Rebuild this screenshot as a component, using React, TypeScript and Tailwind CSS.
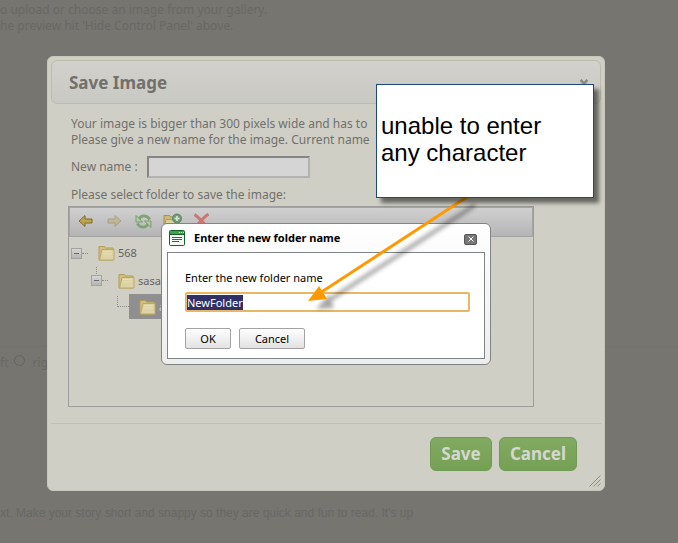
import React, { useEffect, useRef } from "react"

const BackArrow = ({ className }: { className?: string }) => (
  <svg width="15" height="12" viewBox="0 0 15 12" className={className}>
    <path
      d="M7 .6 1 6l6 5.4V8h7V4H7z"
      fill="#bfa44c"
      stroke="#7d6a35"
      strokeWidth="1"
      strokeLinejoin="round"
    />
  </svg>
)

const RefreshIcon = () => (
  <svg width="17" height="17" viewBox="0 0 17 17" fill="none">
    <path d="M4 6.500C5.500 2 11.500 1.500 14.800 6.500" stroke="#7da672" strokeWidth="2.800" />
    <path d="M1 2.500V9h6.500z" fill="#b3cbaa" stroke="#6f9866" strokeWidth=".9" />
    <path d="M13 10.500C11.500 15 5.500 15.500 2.200 10.500" stroke="#7da672" strokeWidth="2.800" />
    <path d="M16 14.500V8H9.500z" fill="#b3cbaa" stroke="#6f9866" strokeWidth=".9" />
  </svg>
)

const FolderIcon = () => (
  <svg width="17" height="16" viewBox="0 0 17 16" className="shrink-0">
    <path d="M1 15V1.500h5.500l1 1.500H15v12z" fill="#d3c07e" stroke="#b39d58" />
    <path d="M4 4.500h12V15H1.500z" fill="#ddd3a2" stroke="#bba868" />
    <path d="M5 6.500h9M4.500 9H14" stroke="#e6dfbc" />
  </svg>
)

const NewFolderIcon = () => (
  <svg width="20" height="16" viewBox="0 0 20 16">
    <path d="M1 14V2.500h5.500l1 1.500H15v10z" fill="#cdbb7c" stroke="#a5924f" />
    <path d="M3 6.500h13V14H1.500z" fill="#dacf9d" stroke="#b09d5c" />
    <circle cx="14" cy="5.500" r="4.500" fill="#6f9c75" stroke="#5a8562" />
    <path d="M14 3v5M11.500 5.500h5" stroke="#dce5dc" strokeWidth="1.600" />
  </svg>
)

const DeleteIcon = () => (
  <svg width="17" height="16" viewBox="0 0 17 16" fill="none">
    <path d="M1.500 1.500C5 4 10 9 14.500 14.500M15.500 1C10 5 6 9 3 14.500" stroke="#cd7773" strokeWidth="3" />
  </svg>
)

const FormIcon = () => (
  <svg width="16" height="16" viewBox="0 0 16 16">
    <rect x=".5" y=".5" width="15" height="15" rx="1" fill="#f4faf4" stroke="#17602b" />
    <path d="M1 1h14v3H1z" fill="#3fa34d" />
    <path d="M10 2.500h1M12 2.500h1M14 2.500h1" stroke="#d8f0d8" />
    <path d="M1 4.500h14" stroke="#17602b" />
    <path d="M3 7.500h10M3 9.500h10M3 11.500h7" stroke="#2c6e3f" />
  </svg>
)

const tools = [
  { name: "Back", icon: <BackArrow /> },
  { name: "Forward", icon: <BackArrow className="-scale-x-100 opacity-40" /> },
  { name: "Refresh", icon: <RefreshIcon /> },
  { name: "New folder", icon: <NewFolderIcon /> },
  { name: "Delete", icon: <DeleteIcon /> },
]

const Toggle = ({ label }: { label: string }) => (
  <button
    aria-label={label}
    className="flex size-[11px] shrink-0 items-center justify-center border border-[#a3a3a3] bg-linear-to-b from-[#d6d6d4] to-[#b5b5b3]"
  >
    <span className="h-px w-[5px] bg-[#686868]" />
  </button>
)

const PageBehind = () => (
  <div className="overflow-hidden whitespace-nowrap text-xs leading-4 text-[#696864]">
    <p className="pt-[2px] font-['Noto_Sans',sans-serif]">
      o upload or choose an image from your gallery.
      <br />
      he preview hit 'Hide Control Panel' above.
    </p>
    <div className="mt-[312px] flex h-[150px] items-start border-t border-[#73726e] pt-[8px] font-['Noto_Sans',sans-serif]">
      <span>ft</span>
      <label className="flex items-start">
        <input
          type="radio"
          name="align"
          className="mr-[7px] ml-[6px] size-[11px] appearance-none rounded-full border border-[#64635f]"
        />
        right
      </label>
    </div>
    <p className="pt-[9px] font-['Liberation_Sans',sans-serif]">
      xt. Make your story short and snappy so they are quick and fun to read. It's up
    </p>
  </div>
)

const FolderBrowser = () => (
  <div className="mr-[67px] ml-[17px] h-[201px] border border-[#9d9d9b] text-[11px] text-[#66635e]">
    <div className="flex h-[30px] items-center border border-[#a4a4a4] bg-linear-to-b from-[#d0d0d0] to-[#b5b5b5] pb-[2px] pl-px">
      {tools.map((tool) => (
        <button key={tool.name} aria-label={tool.name} className="flex w-[29px] justify-center">
          {tool.icon}
        </button>
      ))}
    </div>
    <ul className="pt-[2px] font-['Noto_Sans',sans-serif]">
      <li className="flex h-7 items-center pl-[2px]">
        <Toggle label="Collapse 568" />
        <span className="mr-[10px] w-[6px] border-t border-dotted border-[#8a8a88]" />
        <FolderIcon />
        <span className="ml-[3px]">568</span>
      </li>
      <li className="relative flex h-[27px] items-center pl-[22px]">
        <span className="absolute top-0 left-[27px] h-[7px] border-l border-dotted border-[#8a8a88]" />
        <Toggle label="Collapse sasa" />
        <span className="mr-[10px] w-[6px] border-t border-dotted border-[#8a8a88]" />
        <FolderIcon />
        <span className="ml-[3px]">sasa</span>
      </li>
      <li className="flex h-[25px] items-center pl-[48px]">
        <span className="-mt-[10px] h-[11px] w-3 border-b border-l border-dotted border-[#8a8a88]" />
        <span className="flex h-[25px] w-[90px] items-center bg-[#8f8f8f] pl-[10px] text-[#d0d0d0]">
          <FolderIcon />
          <span className="ml-[3px]">a</span>
        </span>
      </li>
    </ul>
  </div>
)

const NewFolderPrompt = () => {
  const nameRef = useRef<HTMLInputElement>(null)

  useEffect(() => {
    nameRef.current?.focus()
    nameRef.current?.select()
  }, [])

  return (
    <div
      role="dialog"
      aria-labelledby="prompt-title"
      className="absolute top-[166px] left-1/2 w-[330px] -translate-x-1/2 rounded-[6px] border border-[#808486] bg-linear-to-b from-white to-[#ededee] px-[5px] pb-[5px] font-['Noto_Sans',sans-serif] text-[11px] leading-4 text-black"
    >
      <div className="flex h-7 items-center pr-[8px] pl-[2px]">
        <FormIcon />
        <h2 id="prompt-title" className="ml-[9px] font-bold">
          Enter the new folder name
        </h2>
        <button
          aria-label="Close"
          className="mt-[2px] ml-auto flex h-[11px] w-[13px] items-center justify-center rounded-[2px] border border-[#555] bg-[#777]"
        >
          <svg width="6" height="6" viewBox="0 0 6 6">
            <path d="M.5.5l5 5m0-5l-5 5" stroke="#fff" />
          </svg>
        </button>
      </div>
      <form
        className="h-[107px] border border-[#808486] bg-white pt-[17px] pr-[14px] pl-[17px]"
        onSubmit={(e) => e.preventDefault()}
      >
        <label htmlFor="folder-name" className="block">
          Enter the new folder name
        </label>
        <input
          ref={nameRef}
          id="folder-name"
          defaultValue="NewFolder"
          className="mt-[6px] block h-5 w-full rounded-[2px] border-2 border-[#e6b866] bg-white outline-none selection:bg-[#2e3067] selection:text-white"
        />
        <div className="mt-4 flex gap-2">
          <button className="h-[21px] w-[46px] rounded-[2px] border border-[#a3a3a3] bg-linear-to-b from-white to-[#e2e2e2]">
            OK
          </button>
          <button className="h-[21px] w-[66px] rounded-[2px] border border-[#a3a3a3] bg-linear-to-b from-white to-[#e2e2e2]">
            Cancel
          </button>
        </div>
      </form>
    </div>
  )
}

const SaveDialog = () => (
  <div
    role="dialog"
    aria-labelledby="save-title"
    className="relative rounded-[6px] border border-[#c6c6ba] bg-[#cfcfc6] p-[3px] font-['Noto_Sans',sans-serif] text-xs leading-4 text-[#72706b]"
  >
    <div className="flex h-11 items-center justify-between rounded-[6px] border border-[#bdbcab] bg-linear-to-b from-[#d2d1cd] to-[#c9c9c3] pt-[2px] pr-[11px] pl-[17px] font-bold">
      <h1 id="save-title" className="text-[17px]">
        Save Image
      </h1>
      <button aria-label="Close">
        <svg width="10" height="9" viewBox="0 0 10 9">
          <path d="M1.500 1l7 7m0-7l-7 7" stroke="#8c8b86" strokeWidth="2.600" />
        </svg>
      </button>
    </div>
    <p className="overflow-hidden pt-3 pl-5 whitespace-nowrap">
      Your image is bigger than 300 pixels wide and has to
      <br />
      Please give a new name for the image. Current name
    </p>
    <div className="flex items-center pt-2 pl-5">
      <label htmlFor="image-name" className="w-[76px]">
        New name :
      </label>
      <input
        id="image-name"
        className="h-[22px] w-[163px] border-2 border-t-[#858585] border-r-[#b2b2b2] border-b-[#b2b2b2] border-l-[#858585] bg-[#d5d5d5]"
      />
    </div>
    <p className="pt-[9px] pb-[3px] pl-5">Please select folder to save the image:</p>
    <FolderBrowser />
    <div className="mt-4 flex h-[64px] items-center justify-end gap-[7px] border-t border-[#bfbfb5] pr-[24px] pb-[4px] text-[17px] font-bold text-[#d5d8d0]">
      <button className="h-[34px] w-[62px] rounded-[6px] border border-[#6f9a55] bg-linear-to-b from-[#82aa62] to-[#75a054]">
        Save
      </button>
      <button className="h-[34px] w-[78px] rounded-[6px] border border-[#6f9a55] bg-linear-to-b from-[#82aa62] to-[#75a054]">
        Cancel
      </button>
    </div>
    <svg width="12" height="12" viewBox="0 0 12 12" className="absolute right-[3px] bottom-[3px]">
      <path d="M.5 11.500l11-11M4.500 11.500l7-7M8.500 11.500l3-3" stroke="#8d8d88" />
    </svg>
    <NewFolderPrompt />
  </div>
)

const Annotation = () => (
  <>
    <svg width="190" height="130" viewBox="0 0 190 130" className="pointer-events-none absolute top-[190px] left-[300px]">
      <g className="blur-[2px]" transform="translate(8 8)" opacity=".35">
        <path d="M167 7L20 103" stroke="#000" strokeWidth="4" />
        <path d="M8 111l13-14 5 13z" fill="#000" />
      </g>
      <path d="M167 7L20 103" stroke="#ff9900" strokeWidth="3" />
      <path d="M8 111l11-15 8 13z" fill="#ff9900" />
    </svg>
    <p className="absolute top-[84px] left-[376px] flex h-[114px] w-[218px] items-center border border-[#1f497d] bg-white pb-[4px] pl-1 font-['Liberation_Sans',sans-serif] text-2xl leading-[27px] text-black shadow-[5px_5px_4px_rgba(0,0,0,0.5)]">
      unable to enter
      <br />
      any character
    </p>
  </>
)

export default function App() {
  return (
    <main className="relative min-h-screen overflow-hidden bg-[#767570]">
      <PageBehind />
      <div className="absolute inset-0 pt-14 pr-[73px] pl-[47px]">
        <SaveDialog />
      </div>
      <Annotation />
    </main>
  )
}
